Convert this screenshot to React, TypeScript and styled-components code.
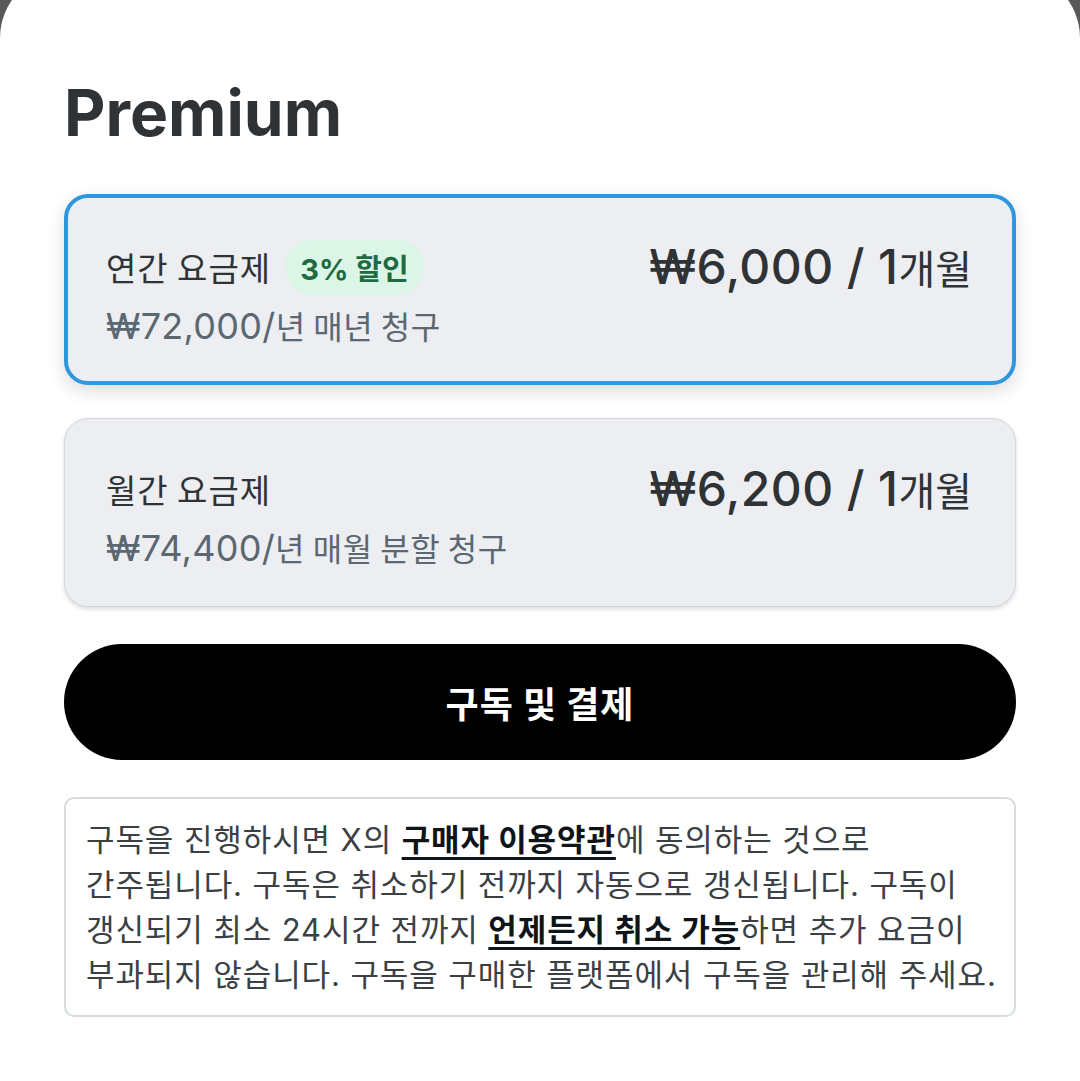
import React from 'react';
import styled, { createGlobalStyle } from 'styled-components';

const GlobalStyle = createGlobalStyle`
	html,
	body {
		margin: 0;
		padding: 0;
		background: #595959;
	}
	body {
		font-family: 'Inter', 'Noto Sans CJK KR', sans-serif;
		color: #2f3336;
		-webkit-font-smoothing: antialiased;
	}
`;

interface Plan {
	id: string;
	name: string;
	discount?: string;
	amount: string;
	unit: string;
	yearly: string;
	billing: string;
}

const plans: Plan[] = [
	{
		id: 'annual',
		name: '연간 요금제',
		discount: '3% 할인',
		amount: '₩6,000 / 1',
		unit: '개월',
		yearly: '₩72,000/',
		billing: '년 매년 청구',
	},
	{
		id: 'monthly',
		name: '월간 요금제',
		amount: '₩6,200 / 1',
		unit: '개월',
		yearly: '₩74,400/',
		billing: '년 매월 분할 청구',
	},
];

const PlanCard = ({ plan, selected }: { plan: Plan; selected: boolean }) => (
	<Card $selected={selected}>
		<TopRow>
			<NameGroup>
				<PlanName>{plan.name}</PlanName>
				{plan.discount && <Badge>{plan.discount}</Badge>}
			</NameGroup>
			<Price>
				<Amount>{plan.amount}</Amount>
				<Unit>{plan.unit}</Unit>
			</Price>
		</TopRow>
		<Billing>
			<BillingAmount>{plan.yearly}</BillingAmount>
			{plan.billing}
		</Billing>
	</Card>
);

export default function App() {
	const [selected] = React.useState('annual');

	return (
		<>
			<GlobalStyle />
			<Sheet>
				<Title>Premium</Title>
				<PlanList>
					{plans.map((plan) => (
						<PlanCard key={plan.id} plan={plan} selected={plan.id === selected} />
					))}
				</PlanList>
				<SubscribeButton type="button">구독 및 결제</SubscribeButton>
				<Notice>
					구독을 진행하시면 X의 <TermsLink>구매자 이용약관</TermsLink>에 동의하는 것으로
					<br />
					간주됩니다. 구독은 취소하기 전까지 자동으로 갱신됩니다. 구독이
					<br />
					갱신되기 최소 24시간 전까지 <TermsLink>언제든지 취소 가능</TermsLink>하면 추가 요금이
					<br />
					부과되지 않습니다. 구독을 구매한 플랫폼에서 구독을 관리해 주세요.
				</Notice>
			</Sheet>
		</>
	);
}

const Sheet = styled.main`
	display: flex;
	flex-direction: column;
	box-sizing: border-box;
	min-height: calc(100vh + 28px);
	margin-top: -28px;
	padding: 109px 64px 40px;
	background: #ffffff;
	border-radius: 66px 66px 0 0;
`;

const Title = styled.h1`
	margin: 0 0 49px;
	font-family: 'Inter', sans-serif;
	font-size: 64px;
	line-height: 64px;
	font-weight: 700;
	color: #2f3336;
`;

const PlanList = styled.div`
	display: flex;
	flex-direction: column;
	gap: 33px;
`;

const Card = styled.div<{ $selected: boolean }>`
	display: flex;
	flex-direction: column;
	gap: 9px;
	background: #eceef1;
	border-radius: 24px;
	border: ${({ $selected }) => ($selected ? '4px solid #2f96e0' : '1px solid #d3d7db')};
	padding: ${({ $selected }) => ($selected ? '40px 40px 35px 38px' : '41px 43px 38px 41px')};
	box-shadow: ${({ $selected }) =>
		$selected ? '0 6px 18px rgba(0, 0, 0, 0.14)' : '0 2px 4px rgba(0, 0, 0, 0.14)'};
`;

const TopRow = styled.div`
	display: flex;
	align-items: center;
	justify-content: space-between;
	min-height: 56px;
`;

const NameGroup = styled.div`
	display: flex;
	align-items: center;
	gap: 14px;
`;

const PlanName = styled.span`
	font-family: 'Noto Sans CJK KR', sans-serif;
	font-size: 33px;
	line-height: 40px;
	letter-spacing: 1px;
	color: #2f3336;
`;

const Badge = styled.span`
	display: inline-flex;
	align-items: center;
	height: 56px;
	padding: 0 15px;
	border-radius: 28px;
	background: #dbf5e6;
	color: #1f6a41;
	font-family: 'Inter', 'Noto Sans CJK KR', sans-serif;
	font-size: 29px;
	font-weight: 700;
`;

const Price = styled.div`
	display: flex;
	align-items: baseline;
	color: #2f3336;
`;

const Amount = styled.span`
	font-family: 'Inter', sans-serif;
	font-size: 48px;
	font-weight: 500;
	line-height: 56px;
	letter-spacing: 0.4px;
`;

const Unit = styled.span`
	font-family: 'Noto Sans CJK KR', sans-serif;
	font-size: 40px;
	font-weight: 400;
`;

const Billing = styled.div`
	display: flex;
	align-items: baseline;
	font-family: 'Noto Sans CJK KR', sans-serif;
	font-size: 32px;
	line-height: 40px;
	letter-spacing: 0.5px;
	color: #5b6771;
`;

const BillingAmount = styled.span`
	font-family: 'Inter', sans-serif;
	font-size: 36px;
	letter-spacing: 0.3px;
`;

const SubscribeButton = styled.button`
	height: 116px;
	margin-top: 37px;
	border: none;
	border-radius: 58px;
	background: #000000;
	color: #ffffff;
	font-family: 'Noto Sans CJK KR', sans-serif;
	font-size: 36px;
	font-weight: 700;
	letter-spacing: 1px;
	cursor: pointer;
`;

const Notice = styled.p`
	margin: 37px 0 0;
	padding: 18px 20px;
	border: 2px solid #d6dcdd;
	border-radius: 10px;
	font-family: 'Inter', 'Noto Sans CJK KR', sans-serif;
	font-size: 31px;
	line-height: 45px;
	letter-spacing: 0.9px;
	color: #3b4045;
	white-space: nowrap;
`;

const TermsLink = styled.a`
	color: #0f1419;
	font-weight: 700;
	text-decoration: underline;
	text-decoration-thickness: 3px;
	text-underline-offset: 6px;
	cursor: pointer;
`;
